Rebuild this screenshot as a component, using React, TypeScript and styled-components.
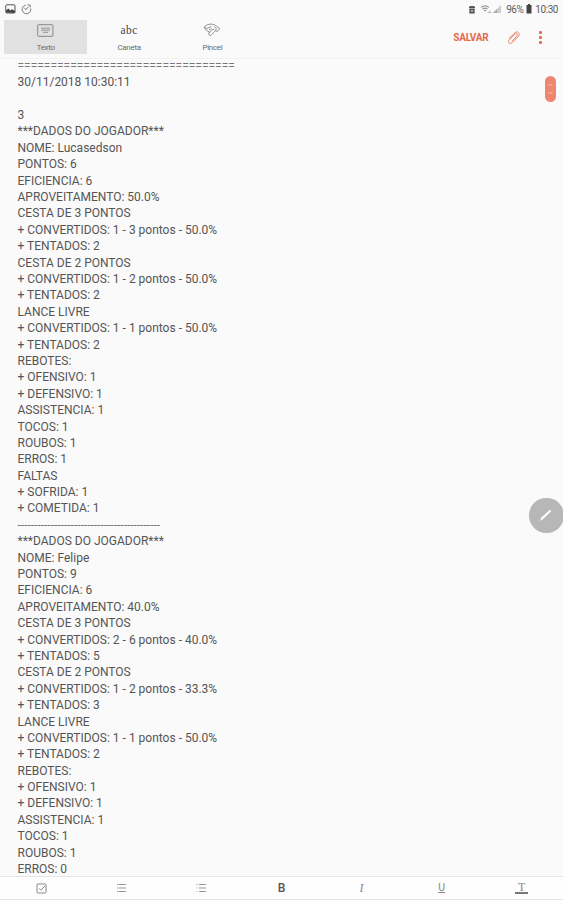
import React from "react";
import styled, { createGlobalStyle } from "styled-components";

const GlobalStyle = createGlobalStyle`
  * { box-sizing: border-box; }
  html, body { margin: 0; background: #fafafa; }
  body { font-family: Roboto, "Liberation Sans", sans-serif; overflow: hidden; }
  svg { display: block; }
`;

const Screen = styled.div`
  position: relative;
  width: 563px;
  height: 900px;
  display: flex;
  flex-direction: column;
  background: #fafafa;
  color: #505050;
  overflow: hidden;
`;

const StatusBar = styled.header`
  display: flex;
  height: 20px;
  flex: none;
  align-items: center;
  justify-content: space-between;
  padding: 0 5px;
`;

const StatusGroup = styled.div<{ $gap: number }>`
  display: flex;
  align-items: center;
  gap: ${(p) => p.$gap}px;
  height: 18px;
  margin-top: -2px;
  font-size: 10px;
  letter-spacing: -0.45px;
  color: #5c5c5c;
`;

const Toolbar = styled.div`
  display: flex;
  flex: none;
  height: 39px;
  padding-left: 4px;
  border-bottom: 1px solid #f3f3f3;
`;

const Tool = styled.button<{ $active?: boolean }>`
  display: flex;
  flex-direction: column;
  align-items: center;
  width: 83.4px;
  height: 34px;
  padding: 2px 0 0;
  border: 0;
  background: ${(p) => (p.$active ? "#e1e1e1" : "transparent")};
  color: #6c6c6c;
  font: 8px/10px Roboto, sans-serif;
  letter-spacing: -0.3px;
`;

const ToolIcon = styled.span`
  display: flex;
  align-items: center;
  justify-content: center;
  height: 16px;
  margin-bottom: 5px;
`;

const Script = styled.span`
  font: 11.5px/16px "Liberation Serif", serif;
  letter-spacing: 0.4px;
  color: #444;
`;

const Actions = styled.div`
  display: flex;
  align-items: center;
  height: 35px;
  margin-left: auto;
  padding-right: 21px;
  color: #e2694c;
`;

const Save = styled.button`
  padding: 0;
  margin-right: 19px;
  border: 0;
  background: none;
  color: #e2694c;
  font: 700 10px/12px Roboto, sans-serif;
  letter-spacing: -0.25px;
`;

const Dots = styled.span`
  display: grid;
  gap: 2.2px;
  margin-left: 18px;
  i {
    width: 2.6px;
    height: 2.6px;
    border-radius: 50%;
    background: #e2694c;
  }
`;

const Note = styled.main`
  flex: 1;
  min-height: 0;
  overflow: hidden;
  padding-left: 17.5px;
  margin-top: -1.1px;
  font-size: 12px;
  line-height: 16.4px;
  white-space: pre;
  color: #555;
`;

const Line = styled.div<{ $faint?: boolean }>`
  height: 16.4px;
  color: ${(p) => (p.$faint ? "#777" : "inherit")};
`;

const FormatBar = styled.footer`
  display: grid;
  grid-template-columns: repeat(7, 80.1px);
  justify-content: center;
  align-items: center;
  height: 24px;
  flex: none;
  background: #fefefe;
  border-top: 1px solid #e5e5e5;
  border-bottom: 1px solid #e5e5e5;
`;

const Format = styled.button`
  display: flex;
  justify-content: center;
  align-items: center;
  padding: 0;
  height: 22px;
  border: 0;
  background: none;
  color: #777;
`;

const Glyph = styled.span<{ $kind: "bold" | "italic" | "under" | "color" }>`
  font-family: ${(p) => (p.$kind === "bold" || p.$kind === "under" ? "Roboto, sans-serif" : '"Liberation Serif", serif')};
  font-size: ${(p) => (p.$kind === "under" ? 10.5 : 12)}px;
  line-height: ${(p) => (p.$kind === "color" ? 10 : 12)}px;
  font-weight: ${(p) => (p.$kind === "bold" ? 500 : 400)};
  font-style: ${(p) => (p.$kind === "italic" ? "italic" : "normal")};
  text-decoration: ${(p) => (p.$kind === "under" ? "underline" : "none")};
  color: ${(p) => (p.$kind === "bold" ? "#555" : "#888")};
  padding: ${(p) => (p.$kind === "color" ? "0 3px" : "0")};
  border-bottom: ${(p) => (p.$kind === "color" ? "2px solid #777" : "0")};
`;

const ScrollThumb = styled.div`
  position: absolute;
  left: 545px;
  top: 76px;
  width: 11px;
  height: 26px;
  border-radius: 6px;
  background: #ee8670;
  display: flex;
  align-items: center;
  justify-content: center;
`;

const EditButton = styled.button`
  position: absolute;
  left: 529px;
  top: 498px;
  width: 34.5px;
  height: 34.5px;
  padding: 0;
  border: 0;
  border-radius: 50%;
  background: #b7b7b7;
  display: flex;
  align-items: center;
  justify-content: center;
`;

type Player = { name: string; points: number; rate: string; three: string; threeTried: number; two: string; twoTried: number; errors: number };

const players: Player[] = [
  { name: "Lucasedson", points: 6, rate: "50.0%", three: "1 - 3 pontos - 50.0%", threeTried: 2, two: "1 - 2 pontos - 50.0%", twoTried: 2, errors: 1 },
  { name: "Felipe", points: 9, rate: "40.0%", three: "2 - 6 pontos - 40.0%", threeTried: 5, two: "1 - 2 pontos - 33.3%", twoTried: 3, errors: 0 },
];

const report = (p: Player) => [
  "***DADOS DO JOGADOR***",
  `NOME: ${p.name}`,
  `PONTOS: ${p.points}`,
  "EFICIENCIA: 6",
  `APROVEITAMENTO: ${p.rate}`,
  "CESTA DE 3 PONTOS",
  `+ CONVERTIDOS: ${p.three}`,
  `+ TENTADOS: ${p.threeTried}`,
  "CESTA DE 2 PONTOS",
  `+ CONVERTIDOS: ${p.two}`,
  `+ TENTADOS: ${p.twoTried}`,
  "LANCE LIVRE",
  "+ CONVERTIDOS: 1 - 1 pontos - 50.0%",
  "+ TENTADOS: 2",
  "REBOTES:",
  "+ OFENSIVO: 1",
  "+ DEFENSIVO: 1",
  "ASSISTENCIA: 1",
  "TOCOS: 1",
  "ROUBOS: 1",
  `ERROS: ${p.errors}`,
];

const lines = [
  "=".repeat(33),
  "30/11/2018 10:30:11",
  "",
  "3",
  ...report(players[0]),
  "FALTAS",
  "+ SOFRIDA: 1",
  "+ COMETIDA: 1",
  "-".repeat(43),
  ...report(players[1]),
];

const ListIcon = ({ numbered }: { numbered?: boolean }) => (
  <svg width="11" height="10" viewBox="0 0 11 10" stroke="#999" fill="none">
    <path d="M3 1.5h7M3 5h7M3 8.5h7" />
    <path d={numbered ? "M1 .5v2M.5 5h1M.5 8.5h1" : "M1 1.5h1.5M1 5h1.5M1 8.5h1.5"} strokeWidth={numbered ? 0.7 : 1} />
  </svg>
);

export default function App() {
  return (
    <>
      <GlobalStyle />
      <Screen>
        <StatusBar>
          <StatusGroup $gap={5}>
            <svg width="11" height="10" viewBox="0 0 11 10">
              <rect x=".8" y=".8" width="9.2" height="8.2" rx=".8" fill="none" stroke="#555" />
              <path d="M1 8.5V6.6l2.3-2 2.1 1.8 1.5-1.2 3 1.6v2.2z" fill="#444" />
            </svg>
            <svg width="11" height="11" viewBox="0 0 11 11" fill="none" stroke="#777">
              <path d="M4.5 1.2A4.3 4.3 0 1 0 9.7 4.5M5 5.5l2.7-2.8M6.5 1h2.7v2.3M3.3 4l1.8 1.7" />
            </svg>
          </StatusGroup>
          <StatusGroup $gap={3}>
            <svg width="8" height="9" viewBox="0 0 8 9">
              <path d="M1 3V2l1-1h4l1 1v1zM1.3 3.5h5.4v5H1.3z" fill="#555" />
              <path d="M2.7 5h2.6v1.8H2.7z" fill="#aaa" />
            </svg>
            <svg width="24" height="10" viewBox="0 0 24 10">
              <path d="M2 3.4q4-3.3 8 0M3.5 5.1q2.6-2 5 0M5 6.8q1.2-1 2.2 0" fill="none" stroke="#909090" strokeWidth="1.1" />
              <path d="M8.5 8.4h4M10.5 6.5v2" stroke="#aaa" strokeWidth=".8" />
              <path d="M14 9l8-8v8z" fill="#ccc" /><path d="M14 9l4-4v4z" fill="#aaa" />
            </svg>
            <span>96%</span>
            <svg width="6" height="10" viewBox="0 0 6 10"><path d="M2 0h2v1h1.5v8.5H.5V1H2z" fill="#444" /></svg>
            <span>10:30</span>
          </StatusGroup>
        </StatusBar>
        <Toolbar>
          <Tool $active>
            <ToolIcon>
              <svg width="17" height="13" viewBox="0 0 17 13" fill="none" stroke="#888">
                <rect x=".7" y=".7" width="15.2" height="11.6" rx=".7" />
                <path d="M4 4.2h9M4 6.2h9M6 8.3h5" strokeWidth=".9" />
              </svg>
            </ToolIcon>
            Texto
          </Tool>
          <Tool><ToolIcon><Script>abc</Script></ToolIcon>Caneta</Tool>
          <Tool>
            <ToolIcon>
              <svg width="18" height="14" viewBox="0 0 18 14" fill="none" stroke="#888" strokeWidth=".9" strokeLinejoin="round">
                <path d="M1 4.2Q4 .8 8 1q4 .1 6 2.6l2.8 2-2.6 3-1.8-.8-5 5-1.8-1.3.8-2.5Q3 8 1 4.2z" />
                <path d="M1 4.2l3.2 1.4 4-2.3M6.4 10l2.2-3.2 2.7-.2M11 3.5l2.5 2.2-1.2 2M6 7l2.6-2" />
              </svg>
            </ToolIcon>
            Pincel
          </Tool>
          <Actions>
            <Save>SALVAR</Save>
            <svg width="14" height="14" viewBox="0 0 14 14" fill="none" stroke="#e58069" strokeLinecap="round">
              <path d="M2.2 7.4L7 2.5c3.5-3.6 7 0 4 3.2l-5.5 5.7c-2.7 2.7-5.5-.2-3.2-2.7l5.2-5.2c1.8-1.8 3.8.1 2.1 2L5.2 10" />
            </svg>
            <Dots><i /><i /><i /></Dots>
          </Actions>
        </Toolbar>
        <Note>
          {lines.map((line, i) => <Line key={i} $faint={/^[=-]+$/.test(line)}>{line}</Line>)}
        </Note>
        <FormatBar>
          <Format>
            <svg width="11" height="11" viewBox="0 0 11 11" fill="none" stroke="#888">
              <rect x="1" y="1" width="9" height="9" rx=".8" /><path d="M3 5.4l1.8 1.8L9 3" />
            </svg>
          </Format>
          <Format><ListIcon /></Format>
          <Format><ListIcon numbered /></Format>
          <Format><Glyph $kind="bold">B</Glyph></Format>
          <Format><Glyph $kind="italic">I</Glyph></Format>
          <Format><Glyph $kind="under">U</Glyph></Format>
          <Format><Glyph $kind="color">T</Glyph></Format>
        </FormatBar>
        <ScrollThumb>
          <svg width="7" height="16" viewBox="0 0 7 16" fill="none" stroke="#f9c5b9"><path d="M1.5 5l2-2 2 2M1.5 11l2 2 2-2" /></svg>
        </ScrollThumb>
        <EditButton>
          <svg width="16" height="16" viewBox="0 0 16 16"><path d="M2 14l1.4-3.4L12 2.8l1.4 1.3-8.4 8z" fill="#fff" /></svg>
        </EditButton>
      </Screen>
    </>
  );
}
